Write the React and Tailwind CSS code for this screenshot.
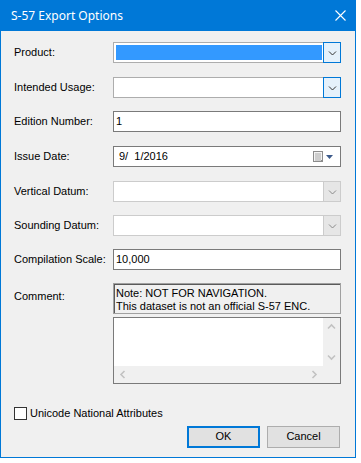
import React from 'react';

const Chevron = ({ color = '#333333' }) => (
  <svg width="9" height="6" viewBox="0 0 9 6">
    <path d="M1 1.5 L4.5 5 L8 1.5" fill="none" stroke={color} strokeWidth="1" />
  </svg>
);

const Combo = ({ selected, active }) => (
  <div
    className={`flex h-[21px] w-[228px] border bg-white ${
      active ? 'border-[#adadad]' : 'border-[#cccccc]'
    }`}
  >
    <div className="flex-1 p-[2px]">
      {selected && <div className="h-full w-full bg-[#3399ff]" />}
    </div>
    {active ? (
      <div className="-m-px flex w-[18px] items-center justify-center border border-[#0078d7] bg-[#e5f1fb]">
        <Chevron />
      </div>
    ) : (
      <div className="-my-px -mr-px flex w-[18px] items-center justify-center border border-[#cccccc] bg-[#e6e6e6]">
        <Chevron color="#8a8a8a" />
      </div>
    )}
  </div>
);

const TextBox = ({ value, children }) => (
  <div className="flex h-[21px] w-[228px] items-center border border-[#7a7a7a] bg-white pl-[2px] text-[11px] text-black">
    {children || value}
  </div>
);

const Row = ({ label, className = '', children }) => (
  <div className={`flex items-center ${className}`}>
    <div className="w-[99px] text-[11px] text-black">{label}</div>
    {children}
  </div>
);

const CalendarIcon = () => (
  <svg width="22" height="12" viewBox="0 0 22 12">
    <rect x="0.5" y="0.5" width="9" height="10" fill="#f4f4f4" stroke="#8c8c8c" />
    <path d="M2 3h6M2 5h6M2 7h6M2 9h6M3 2v8M5 2v8M7 2v8" stroke="#b9b9b9" strokeWidth="0.8" />
    <path d="M9.5 8.5 L7 11" stroke="#8c8c8c" />
    <path d="M13 4 H20 L16.5 8 Z" fill="#3c5a8a" />
  </svg>
);

const Arrow = ({ d }) => (
  <svg width="9" height="7" viewBox="0 0 9 7">
    <path d={d} fill="none" stroke="#c2c2c2" strokeWidth="1.6" />
  </svg>
);

export default function App() {
  return (
    <div className="h-[463px] w-[361px] bg-white" style={{ fontFamily: '"Liberation Sans", Arial, sans-serif' }}>
      <div className="flex h-[458px] w-[356px] flex-col border-x border-b border-[#0078d7] bg-[#f0f0f0]">
        {/* Title bar */}
        <div className="-mx-px flex h-[31px] shrink-0 items-center justify-between bg-[#0078d7] pl-[11px] pr-[10px]">
          <span className="text-[12px] text-white" style={{ fontFamily: '"Noto Sans", "Liberation Sans", sans-serif' }}>
            S-57 Export Options
          </span>
          <svg width="11" height="11" viewBox="0 0 11 11">
            <path d="M0.5 0.5 L10.5 10.5 M10.5 0.5 L0.5 10.5" stroke="white" strokeWidth="1.1" />
          </svg>
        </div>

        <div className="flex flex-1 flex-col pl-[13px] pt-[11px]">
          <Row label="Product:">
            <Combo selected active />
          </Row>
          <Row label="Intended Usage:" className="mt-[14px]">
            <Combo active />
          </Row>
          <Row label="Edition Number:" className="mt-[13px]">
            <TextBox value="1" />
          </Row>
          <Row label="Issue Date:" className="mt-[14px]">
            <TextBox>
              <div className="flex w-full items-center justify-between pl-[3px] pr-[5px]">
                <span>9/&nbsp;&nbsp;1/2016</span>
                <CalendarIcon />
              </div>
            </TextBox>
          </Row>
          <Row label="Vertical Datum:" className="mt-[14px]">
            <Combo />
          </Row>
          <Row label="Sounding Datum:" className="mt-[13px]">
            <Combo />
          </Row>
          <Row label="Compilation Scale:" className="mt-[13px]">
            <TextBox value="10,000" />
          </Row>

          {/* Comment */}
          <div className="mt-[13px] flex">
            <div className="w-[99px] pt-[5px] text-[11px] text-black">Comment:</div>
            <div className="flex flex-col">
              <div className="h-[31px] w-[228px] border border-[#a0a0a0] bg-[#f0f0f0]">
                <div className="h-full border-l border-t border-[#5a5a5a] pl-[1px] pt-[2px] text-[11px] leading-[13px] text-black">
                  <div>Note: NOT FOR NAVIGATION.</div>
                  <div>This dataset is not an official S-57 ENC.</div>
                </div>
              </div>
              <div className="mt-[3px] grid h-[67px] w-[228px] grid-cols-[1fr_17px] grid-rows-[1fr_17px] border border-[#7a7a7a] bg-[#f0f0f0]">
                <div className="bg-white" />
                <div className="flex flex-col items-center justify-between py-[5px]">
                  <Arrow d="M1 5.5 L4.5 2 L8 5.5" />
                  <Arrow d="M1 1.5 L4.5 5 L8 1.5" />
                </div>
                <div className="flex items-center justify-between px-[5px]">
                  <svg width="7" height="9" viewBox="0 0 7 9">
                    <path d="M5.5 1 L2 4.5 L5.5 8" fill="none" stroke="#c2c2c2" strokeWidth="1.6" />
                  </svg>
                  <svg width="7" height="9" viewBox="0 0 7 9">
                    <path d="M1.5 1 L5 4.5 L1.5 8" fill="none" stroke="#c2c2c2" strokeWidth="1.6" />
                  </svg>
                </div>
                <div />
              </div>
            </div>
          </div>

          {/* Checkbox */}
          <div className="mt-[21px] flex items-center">
            <div className="h-[13px] w-[13px] border border-[#333333] bg-white" />
            <span className="ml-[3px] text-[11px] text-black">Unicode National Attributes</span>
          </div>

          {/* Buttons */}
          <div className="mt-[4px] flex justify-end gap-[7px] pr-[15px]">
            <button className="h-[22px] w-[73px] border-2 border-[#0078d7] bg-[#e1e1e1] text-[11px] text-black">
              OK
            </button>
            <button className="h-[22px] w-[73px] border border-[#adadad] bg-[#e1e1e1] text-[11px] text-black">
              Cancel
            </button>
          </div>
        </div>
      </div>
    </div>
  );
}
